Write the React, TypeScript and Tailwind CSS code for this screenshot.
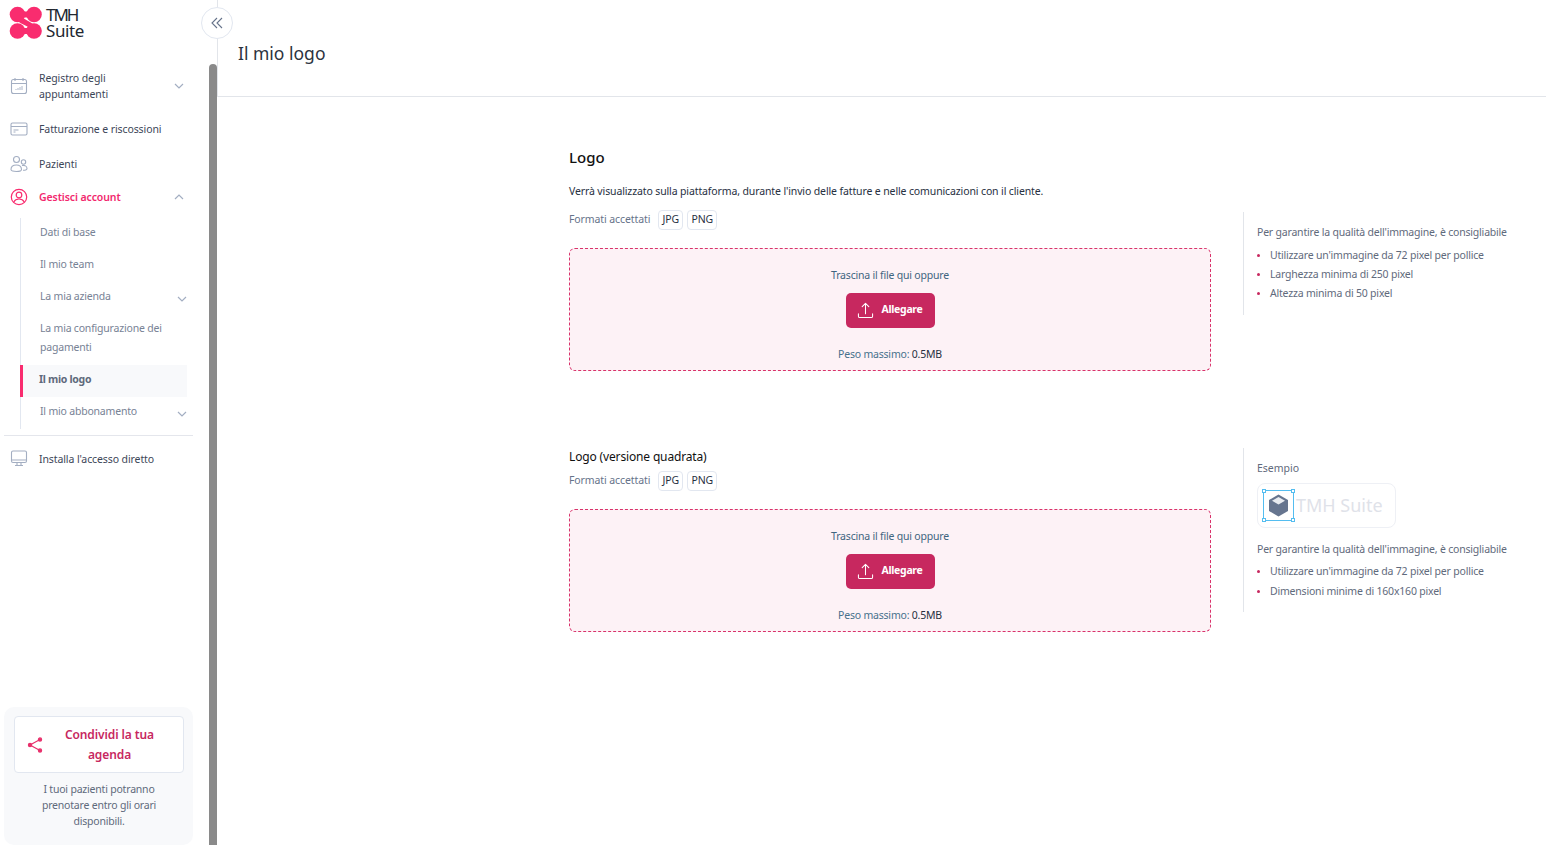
const FONT = "font-['Noto_Sans',sans-serif]";

function Logo() {
  return (
    <div className="flex items-center gap-[3px]">
      <svg width="34" height="34" viewBox="0 0 34 34" fill="#f92c6f">
        <circle cx="8.500" cy="8.500" r="7.800" />
        <circle cx="25" cy="8.500" r="7.800" />
        <circle cx="8.500" cy="25" r="7.800" />
        <circle cx="25" cy="25" r="7.800" />
        <path d="M8.500 8.500h16.500M8.500 25h16.500" stroke="#f92c6f" strokeWidth="6" fill="none" />
        <path d="M8 10c3 6.500 15 7 17.500 14" stroke="#f92c6f" strokeWidth="5.500" fill="none" />
      </svg>
      <div className="text-[17px] leading-[16px] text-[#222831]">
        <div className="tracking-[-2px]">TMH</div>
        <div className="tracking-[-0.4px]">Suite</div>
      </div>
    </div>
  );
}

function CalendarIcon() {
  return (
    <svg width="18" height="18" viewBox="0 0 18 18" fill="none" stroke="#a3aec2" strokeWidth="1.100">
      <rect x="1.500" y="2.500" width="15" height="14" rx="2" />
      <path d="M1.500 6.500h15M5 1v3M13 1v3" />
      <path d="M6 13v-1M8 13v-2M10 13v-3M12 13v-4" strokeWidth="0.900" />
    </svg>
  );
}

function CardIcon() {
  return (
    <svg width="18" height="18" viewBox="0 0 18 18" fill="none" stroke="#a3aec2" strokeWidth="1.100">
      <rect x="1" y="3" width="16" height="12" rx="1.500" />
      <path d="M1 6.500h16M3.500 10h5M3.500 12h2" />
    </svg>
  );
}

function PeopleIcon() {
  return (
    <svg width="18" height="18" viewBox="0 0 18 18" fill="none" stroke="#a3aec2" strokeWidth="1.100">
      <circle cx="6.500" cy="4.500" r="3" />
      <circle cx="13.500" cy="7" r="2.200" />
      <path d="M1 14.500c0-3 2.500-4.500 5.500-4.500s5 1.500 5 4.500c0 1.500-2 2-5 2s-5.500-.5-5.500-2z" />
      <path d="M12 10.500c2.500-.5 5 .5 5 3 0 1.200-1.500 1.800-4 1.800" />
    </svg>
  );
}

function AccountIcon() {
  return (
    <svg width="18" height="18" viewBox="0 0 18 18" fill="none" stroke="#f92c6f" strokeWidth="1.200">
      <circle cx="9" cy="9" r="7.700" />
      <circle cx="9" cy="7" r="2.800" />
      <path d="M3.800 14c1-2 3-3 5.200-3s4.200 1 5.200 3" />
    </svg>
  );
}

function MonitorIcon() {
  return (
    <svg width="18" height="18" viewBox="0 0 18 18" fill="none" stroke="#a3aec2" strokeWidth="1.100">
      <rect x="1.500" y="1" width="15" height="11.500" rx="1.500" />
      <path d="M1.500 10h15M7 12.500v3M11 12.500v3M5 15.500h8" />
    </svg>
  );
}

function UploadIcon() {
  return (
    <svg width="17" height="17" viewBox="0 0 18 18" fill="none" stroke="#ffffff" strokeWidth="1.100" strokeLinecap="round" strokeLinejoin="round">
      <path d="M9 12.500V1.500M5.500 5L9 1.500 12.500 5" />
      <path d="M1.500 12.500v2.500a1.500 1.500 0 0 0 1.500 1.500h12a1.500 1.500 0 0 0 1.500-1.500v-2.500" />
    </svg>
  );
}

function Chevron({ up, className = "" }: { up?: boolean; className?: string }) {
  return (
    <svg width="10" height="6" viewBox="0 0 10 6" fill="none" stroke="#a3aec2" strokeWidth="1.200" className={className}>
      <path d={up ? "M1 5l4-4 4 4" : "M1 1l4 4 4-4"} />
    </svg>
  );
}

function ShareIcon() {
  return (
    <svg width="16" height="16" viewBox="0 0 16 16" fill="#e8306c" stroke="#e8306c" strokeWidth="1.200" className="shrink-0">
      <path d="M13 2.500L3 8l10 5.500" fill="none" />
      <circle cx="13" cy="2.500" r="1.600" />
      <circle cx="3" cy="8" r="1.600" />
      <circle cx="13" cy="13.500" r="1.600" />
    </svg>
  );
}

function NavItem({ icon, label, open, active }: { icon: React.ReactNode; label: React.ReactNode; open?: "up" | "down"; active?: boolean }) {
  return (
    <div className="flex items-center pl-[10px] pr-[25px]">
      <span className="w-[29px] shrink-0">{icon}</span>
      <span className={`flex-1 text-[10.500px] leading-[16px] tracking-[-0.1px] ${active ? "font-semibold text-[#f2286e]" : "text-[#3c4658]"}`}>
        {label}
      </span>
      {open === "down" && <Chevron />}
      {open === "up" && <Chevron up />}
    </div>
  );
}

function SubItem({ label, chevron, h = "h-[32px]" }: { label: React.ReactNode; chevron?: boolean; h?: string }) {
  return (
    <div className={`flex items-center justify-between pb-[4px] pl-[19px] text-[10.500px] leading-[19px] tracking-[-0.2px] text-[#778295] ${h}`}>
      <span>{label}</span>
      {chevron && <Chevron className="mt-[6px]" />}
    </div>
  );
}

function Sidebar() {
  return (
    <aside className="flex h-[845px] w-[217px] shrink-0">
      <div className="flex w-[209px] flex-col">
        <div className="pl-[9px] pt-[6px]">
          <Logo />
        </div>
        <nav className="mt-[30px] flex flex-col">
          <NavItem icon={<CalendarIcon />} label={<>Registro degli<br />appuntamenti</>} open="down" />
          <div className="mt-[18px]">
            <NavItem icon={<CardIcon />} label="Fatturazione e riscossioni" />
          </div>
          <div className="mt-[17px]">
            <NavItem icon={<PeopleIcon />} label="Pazienti" />
          </div>
          <div className="mt-[15px]">
            <NavItem icon={<AccountIcon />} label="Gestisci account" open="up" active />
          </div>
          <div className="mb-[6px] ml-[20px] mr-[22px] mt-[12px] border-l border-[#e2e7f0]">
            <SubItem label="Dati di base" />
            <SubItem label="Il mio team" />
            <SubItem label="La mia azienda" chevron />
            <SubItem label={<>La mia configurazione dei<br />pagamenti</>} h="h-[51px]" />
            <div className="-ml-px flex h-[32px] items-center border-l-[3px] border-[#f92c6f] bg-[#f8f9fb] pb-[3px] pl-[16px] text-[10.500px] font-bold tracking-[-0.3px] text-[#5f6a7c]">
              Il mio logo
            </div>
            <SubItem label="Il mio abbonamento" chevron />
          </div>
        </nav>
        <div className="ml-[4px] mr-[16px] border-t border-[#e4e6ec]" />
        <div className="mt-[14px]">
          <NavItem icon={<MonitorIcon />} label="Installa l'accesso diretto" />
        </div>
        <div className="ml-[4px] mr-[16px] mt-auto rounded-[10px] bg-[#f8f9fb] pb-[16px] pl-[10px] pr-[9px] pt-[9px]">
          <div className="flex h-[57px] items-center rounded-[4px] border border-[#e2e7f0] bg-white pl-[12px] pr-[7px]">
            <ShareIcon />
            <div className="flex-1 text-center text-[12px] font-semibold leading-[20px] tracking-[-0.1px] text-[#c7285f]">
              Condividi la tua<br />agenda
            </div>
          </div>
          <p className="mt-[8px] text-center text-[10.500px] leading-[16px] tracking-[-0.2px] text-[#5f6a7c]">
            I tuoi pazienti potranno<br />prenotare entro gli orari<br />disponibili.
          </p>
        </div>
      </div>
      <div className="w-2 pt-[64px]">
        <div className="h-full rounded-t-[4px] bg-[#8a8a8a]" />
      </div>
    </aside>
  );
}

function Formats() {
  return (
    <div className="flex items-center gap-[4px] text-[10.500px] tracking-[-0.1px] text-[#66738a]">
      <span className="mr-[4px]">Formati accettati</span>
      <span className="flex h-[20px] w-[25px] items-center justify-center rounded-[4px] border border-[#e2e7f0] text-[#27303f]">JPG</span>
      <span className="flex h-[20px] w-[30px] items-center justify-center rounded-[4px] border border-[#e2e7f0] text-[#27303f]">PNG</span>
    </div>
  );
}

function DropZone() {
  return (
    <div className="mt-[18px] flex h-[123px] flex-col items-center rounded-[6px] border border-dashed border-[#d9336b] bg-[#fdf2f6] pt-[18px] text-[10.500px] leading-[16px] tracking-[-0.2px]">
      <div className="text-[#3f6580]">Trascina il file qui oppure</div>
      <button className="mt-[10px] flex h-[35px] w-[89px] items-center justify-center gap-[7px] rounded-[5px] bg-[#c7285f] font-bold tracking-[-0.3px] text-white">
        <UploadIcon />
        <span className="-mt-[3px]">Allegare</span>
      </button>
      <div className="mt-[18px] text-[#47718c]">
        Peso massimo: <span className="text-[#27303f]">0.5MB</span>
      </div>
    </div>
  );
}

function Hints({ items, gap, top }: { items: string[]; gap: string; top: string }) {
  return (
    <div className="text-[10.500px] leading-[16px] tracking-[-0.2px] text-[#5f6a7c]">
      <p>Per garantire la qualità dell'immagine, è consigliabile</p>
      <ul className={`flex flex-col ${top} ${gap}`}>
        {items.map((item) => (
          <li key={item} className="flex items-center gap-[10px]">
            <span className="h-[3px] w-[3px] rounded-full bg-[#c7285f]" />
            {item}
          </li>
        ))}
      </ul>
    </div>
  );
}

function ExampleLogo() {
  return (
    <div className="mt-[7px] flex h-[45px] w-[139px] items-center rounded-[8px] border border-[#eef0f5] pl-[5px]">
      <div className="relative flex h-[31px] w-[31px] items-center justify-center border border-[#54bdf0]">
        <span className="absolute -left-[2px] -top-[2px] h-[4px] w-[4px] border border-[#54bdf0] bg-white" />
        <span className="absolute -right-[2px] -top-[2px] h-[4px] w-[4px] border border-[#54bdf0] bg-white" />
        <span className="absolute -bottom-[2px] -left-[2px] h-[4px] w-[4px] border border-[#54bdf0] bg-white" />
        <span className="absolute -bottom-[2px] -right-[2px] h-[4px] w-[4px] border border-[#54bdf0] bg-white" />
        <svg width="21" height="23" viewBox="0 0 21 23">
          <path d="M10.500 0.500L20 6v11l-9.500 5.500L1 17V6z" fill="#66758f" />
          <path d="M10.500 3L17 6.800l-6.500 3.700L4 6.800z" fill="#e8ebf0" />
        </svg>
      </div>
      <span className="ml-[2px] text-[18px] text-[#dfe2e9]">TMH Suite</span>
    </div>
  );
}

export default function App() {
  return (
    <div className={`flex h-[845px] overflow-hidden bg-white ${FONT}`}>
      <Sidebar />
      <main className="relative flex-1">
        <header className="flex h-[97px] items-center border-b border-[#e2e5ea] pl-[21px] pt-[11px]">
          <h1 className="text-[17.500px] text-[#2c3340]">Il mio logo</h1>
        </header>
        <div className="absolute left-0 top-0 h-[97px] border-l border-[#e2e5ea]" />
        <button className="absolute -left-[16px] top-[7px] flex h-[32px] w-[32px] items-center justify-center rounded-full border border-[#e2e7f0] bg-white">
          <svg width="12" height="12" viewBox="0 0 12 12" fill="none" stroke="#66738a" strokeWidth="1.100">
            <path d="M6 1L1 6l5 5M11 1L6 6l5 5" />
          </svg>
        </button>

        <div className="ml-[352px] flex flex-col pt-[50px]">
          <section className="flex h-[301px]">
            <div className="w-[642px]">
              <h2 className="text-[15px] font-medium leading-[20px] text-[#111]">Logo</h2>
              <p className="mt-[16px] text-[10.500px] leading-[16px] tracking-[-0.125px] text-[#27303f]">
                Verrà visualizzato sulla piattaforma, durante l'invio delle fatture e nelle comunicazioni con il cliente.
              </p>
              <div className="mt-[11px]"><Formats /></div>
              <DropZone />
            </div>
            <div className="ml-[32px] mt-[65px] h-[103px] border-l border-[#e2e5ea] pl-[13px] pt-[12px]">
              <Hints top="mt-[7px]" gap="gap-[3px]" items={["Utilizzare un'immagine da 72 pixel per pollice", "Larghezza minima di 250 pixel", "Altezza minima di 50 pixel"]} />
            </div>
          </section>
          <section className="flex">
            <div className="w-[642px]">
              <h2 className="text-[12px] leading-[18px] tracking-[-0.15px] text-[#111]">Logo (versione quadrata)</h2>
              <div className="mt-[5px]"><Formats /></div>
              <DropZone />
            </div>
            <div className="ml-[32px] h-[164px] border-l border-[#e2e5ea] pl-[13px] pt-[12px]">
              <p className="text-[10.500px] leading-[16px] text-[#5f6a7c]">Esempio</p>
              <ExampleLogo />
              <div className="mt-[13px]">
                <Hints top="mt-[6px]" gap="gap-[4px]" items={["Utilizzare un'immagine da 72 pixel per pollice", "Dimensioni minime di 160x160 pixel"]} />
              </div>
            </div>
          </section>
        </div>
      </main>
    </div>
  );
}
